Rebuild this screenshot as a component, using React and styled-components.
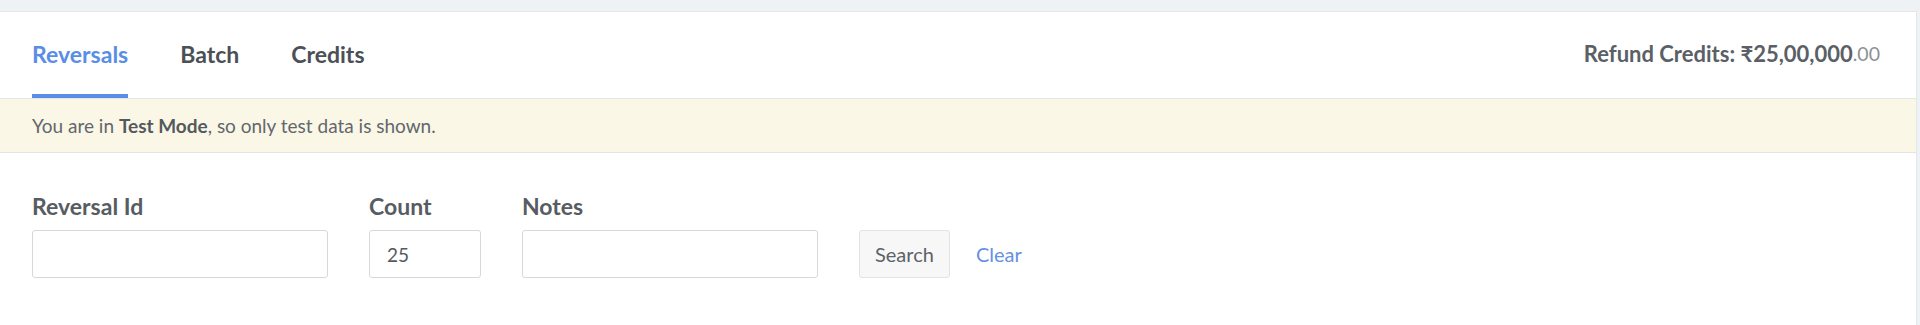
import React from "react";
import styled, { createGlobalStyle } from "styled-components";

const GlobalStyle = createGlobalStyle`
  html, body {
    margin: 0;
    padding: 0;
    background: #eef2f4;
    font-family: Lato, "Open Sans", "Liberation Sans", sans-serif;
  }
  * {
    box-sizing: border-box;
  }
`;

const tabs = ["Reversals", "Batch", "Credits"];

const fields = [
  { label: "Reversal Id", width: 296, value: "" },
  { label: "Count", width: 112, value: "25" },
  { label: "Notes", width: 296, value: "" },
];

const Page = styled.div`
  padding-top: 11px;
  min-height: 325px;
`;

const Card = styled.div`
  background: #fff;
  margin-right: 3px;
  min-height: 314px;
  border-top: 1px solid #e2e7ea;
  border-right: 1px solid #e2e7ea;
`;

const TabBar = styled.div`
  display: flex;
  justify-content: space-between;
  height: 87px;
  padding: 0 36px 0 32px;
  border-bottom: 1px solid #e4e7ea;
`;

const Tabs = styled.div`
  display: flex;
  gap: 52px;
`;

const Tab = styled.div`
  display: flex;
  align-items: center;
  padding-top: 1px;
  font-size: 23px;
  font-weight: 700;
  color: ${(p) => (p.active ? "#5a8ee6" : "#4b5056")};
  border-bottom: 4px solid ${(p) => (p.active ? "#5a8ee6" : "transparent")};
  cursor: pointer;
`;

const Credits = styled.div`
  display: flex;
  align-items: center;
  padding-bottom: 3px;
  font-size: 22px;
  font-weight: 700;
  color: #5a6066;

  span {
    font-size: 19.5px;
    font-weight: 400;
    color: #8c9196;
  }
`;

const Banner = styled.div`
  display: flex;
  align-items: center;
  height: 54px;
  padding-left: 32px;
  background: #faf7e7;
  border-bottom: 1px solid #e3e5e2;
  font-size: 19px;
  color: #62676c;

  b {
    font-weight: 700;
    color: #54595e;
  }
`;

const Form = styled.div`
  display: flex;
  align-items: flex-end;
  padding: 39px 32px 0;
`;

const Field = styled.div`
  display: flex;
  flex-direction: column;
  margin-right: 41px;
`;

const Label = styled.label`
  font-size: 23px;
  font-weight: 700;
  line-height: 28px;
  color: #575c62;
  margin-bottom: 10px;
`;

const Input = styled.input`
  width: ${(p) => p.width}px;
  height: 48px;
  padding: 0 17px;
  border: 1px solid #d6d9dc;
  border-radius: 3px;
  font-family: inherit;
  font-size: 19px;
  color: #555a5f;
  background: #fff;
  outline: none;
`;

const SearchButton = styled.button`
  height: 48px;
  padding: 0 15px;
  border: 1px solid #e1e3e5;
  border-radius: 3px;
  background: #f7f7f7;
  font-family: inherit;
  font-size: 20px;
  color: #5d6267;
  cursor: pointer;
`;

const ClearLink = styled.a`
  display: flex;
  align-items: center;
  height: 48px;
  margin-left: 26px;
  font-size: 20px;
  color: #6591e0;
  text-decoration: none;
  cursor: pointer;
`;

export default function App() {
  return (
    <Page>
      <GlobalStyle />
      <Card>
        <TabBar>
          <Tabs>
            {tabs.map((t, i) => (
              <Tab key={t} active={i === 0}>
                {t}
              </Tab>
            ))}
          </Tabs>
          <Credits>
            Refund Credits: ₹25,00,000<span>.00</span>
          </Credits>
        </TabBar>
        <Banner>
          <div>
            You are in <b>Test Mode</b>, so only test data is shown.
          </div>
        </Banner>
        <Form>
          {fields.map((f) => (
            <Field key={f.label}>
              <Label>{f.label}</Label>
              <Input width={f.width} defaultValue={f.value} />
            </Field>
          ))}
          <SearchButton>Search</SearchButton>
          <ClearLink>Clear</ClearLink>
        </Form>
      </Card>
    </Page>
  );
}
